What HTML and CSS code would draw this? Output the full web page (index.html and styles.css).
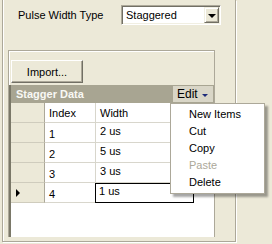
FILE: index.html
```html
<!DOCTYPE html>
<html>
<head>
<meta charset="UTF-8">
<title>Stagger Data</title>
<link rel="stylesheet" href="styles.css">
</head>
<body>
<div class="panel">
    <div class="type-row">
        <span class="type-label">Pulse Width Type</span>
        <div class="combo"><span class="combo-text">Staggered</span><span class="combo-btn"><i class="down"></i></span></div>
    </div>
    <div class="group">
        <button class="btn">Import...</button>
        <div class="grid">
            <div class="caption"><span class="caption-text">Stagger Data</span><span class="edit">Edit <i class="edit-arrow"></i></span></div>
            <div class="cells">
                <div class="rh"></div><div class="ch">Index</div><div class="ch">Width</div><div class="blank"></div>
                <div class="rh"></div><div class="c idx">1</div><div class="c val">2 us</div><div class="blank"></div>
                <div class="rh"></div><div class="c idx">2</div><div class="c val">5 us</div><div class="blank"></div>
                <div class="rh"></div><div class="c idx">3</div><div class="c val">3 us</div><div class="blank"></div>
                <div class="rh"><i class="current"></i></div><div class="c idx">4</div><div class="c val editing">1 us</div><div class="blank"></div>
            </div>
        </div>
    </div>
</div>
<div class="menu">
    <div class="item">New Items</div>
    <div class="item">Cut</div>
    <div class="item">Copy</div>
    <div class="item disabled">Paste</div>
    <div class="item">Delete</div>
</div>
</body>
</html>
```

FILE: styles.css
```css
html, body {
    margin: 0;
    height: 100%;
    overflow: hidden;
}
body {
    background: #ECE9D8;
    font-family: "Liberation Sans", Arial, sans-serif;
    font-size: 11px;
    color: #000;
}
.panel {
    margin-left: 2px;
    width: 232px;
    height: 241px;
    border: 1px solid #ACA899;
    border-top: none;
    box-shadow: inset 1px 0 0 #fff, 1px 1px 0 #fff;
}
.type-row {
    display: flex;
    align-items: center;
    padding-top: 5px;
    height: 20px;
}
.type-label {
    width: 118px;
    padding-left: 15px;
    box-sizing: border-box;
}
.combo {
    width: 100px;
    height: 20px;
    box-sizing: border-box;
    border: 1px solid;
    border-color: #ACA899 #fff #fff #ACA899;
    box-shadow: inset 1px 1px 0 #716F64, inset -1px -1px 0 #F1EFE2;
    background: #fff;
    display: flex;
    align-items: center;
    padding: 1px 1px 1px 2px;
}
.combo-text {
    flex: 1;
    padding-left: 2px;
}
.combo-btn {
    width: 15px;
    height: 16px;
    box-sizing: border-box;
    background: #ECE9D8;
    border: 1px solid;
    border-color: #F1EFE2 #716F64 #716F64 #F1EFE2;
    box-shadow: inset 1px 1px 0 #fff, inset -1px -1px 0 #ACA899;
    display: flex;
    align-items: center;
    justify-content: center;
}
.down {
    border-top: 4px solid #000;
    border-left: 4px solid transparent;
    border-right: 4px solid transparent;
    margin-top: 1px;
}
.group {
    margin: 25px 0 0 5px;
    width: 207px;
    height: 187px;
    box-sizing: border-box;
    border: 1px solid #ACA899;
    border-bottom: none;
    box-shadow: inset 1px 1px 0 #fff;
    display: flex;
    flex-direction: column;
    align-items: flex-start;
}
.btn {
    margin: 9px 0 0 2px;
    width: 72px;
    height: 23px;
    padding: 0;
    font: inherit;
    color: #000;
    background: #ECE9D8;
    border: 1px solid;
    border-color: #fff #716F64 #716F64 #fff;
    box-shadow: inset -1px -1px 0 #ACA899;
}
.grid {
    margin-top: 2px;
    width: 205px;
    height: 152px;
    box-sizing: border-box;
    border-left: 2px solid #7A7868;
    background: #fff;
}
.caption {
    height: 18px;
    background: #A8A592;
    display: flex;
    align-items: center;
    justify-content: space-between;
}
.caption-text {
    padding-left: 5px;
    font-weight: bold;
    color: #F8F8F4;
}
.edit {
    width: 40px;
    height: 16px;
    margin-right: 1px;
    box-sizing: border-box;
    padding-left: 4px;
    background: #D9D6C7;
    display: flex;
    align-items: center;
    gap: 4px;
    font-size: 12px;
}
.edit-arrow {
    border-top: 3px solid #1C2A7A;
    border-left: 3px solid transparent;
    border-right: 3px solid transparent;
    margin-top: 2px;
}
.cells {
    display: grid;
    grid-template-columns: 34px 51px 98px 1fr;
    grid-auto-rows: 20px;
}
.rh {
    background: #ECE9D8;
    border-right: 1px solid #ACA899;
    border-bottom: 1px solid #CFCCBD;
    display: flex;
    align-items: center;
    padding-left: 4px;
}
.ch, .c {
    border-right: 1px solid #D8D6CC;
    border-bottom: 1px solid #D8D6CC;
    padding-left: 4px;
}
.ch {
    display: flex;
    align-items: center;
}
.idx {
    padding-top: 5px;
}
.val {
    padding-top: 2px;
}
.editing {
    border: 1px solid #000;
    margin-left: -1px;
    padding-left: 3px;
    padding-top: 1px;
}
.current {
    border-left: 4px solid #000;
    border-top: 4px solid transparent;
    border-bottom: 4px solid transparent;
    margin: 1px 0 0 1px;
}
.menu {
    position: absolute;
    left: 170px;
    top: 103px;
    width: 93px;
    padding: 2px 0;
    background: #fff;
    border: 1px solid #ACA899;
    box-shadow: 3px 3px 2px rgba(0, 0, 0, 0.35);
}
.item {
    height: 17px;
    line-height: 17px;
    padding-left: 18px;
}
.item.disabled {
    color: #ACA899;
}
```
